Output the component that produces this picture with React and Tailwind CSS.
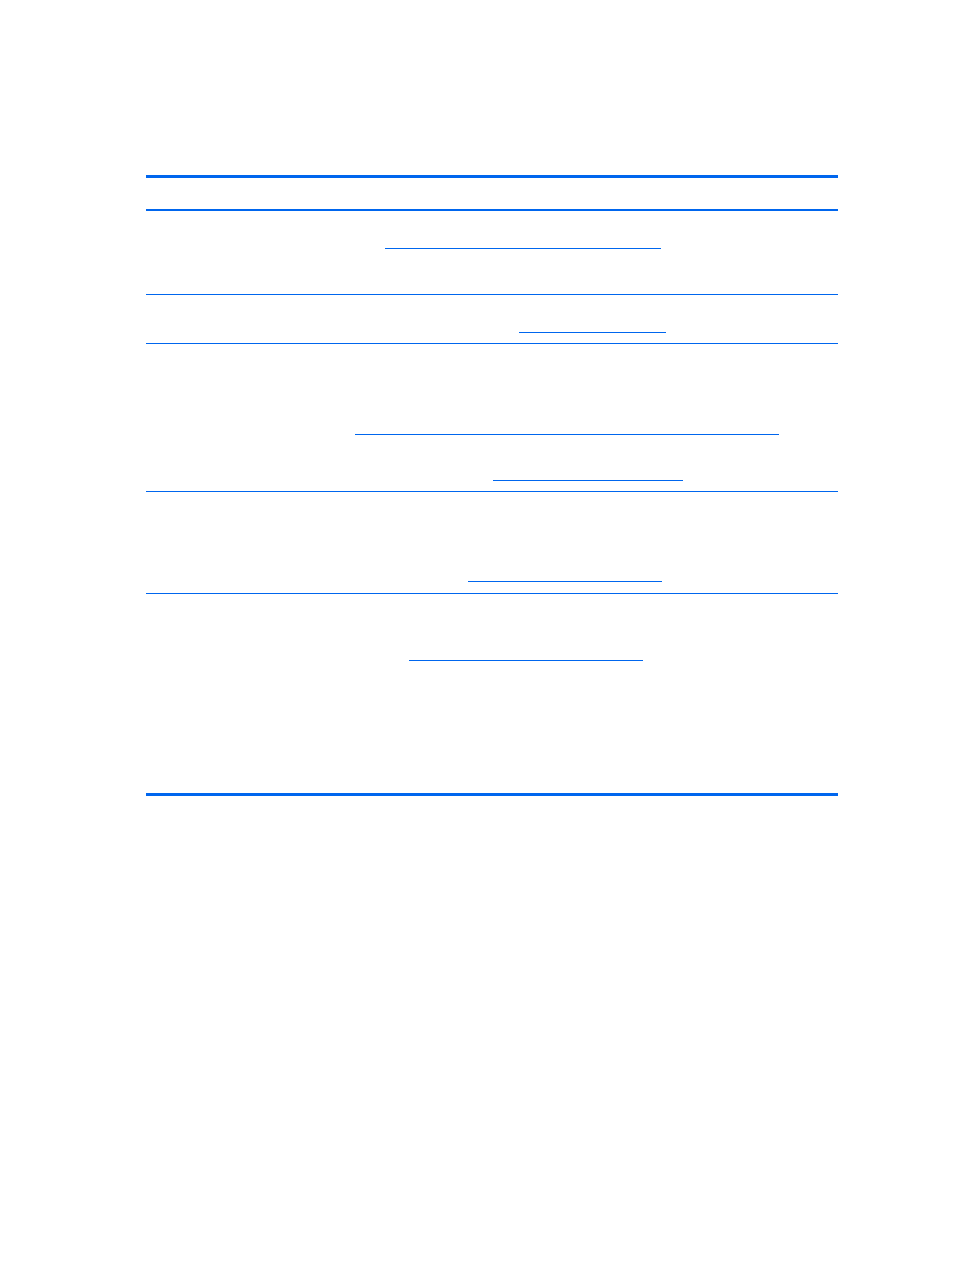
export default function App() {
  const line = "bg-[#0066ee]";
  return (
    <div className="min-h-[1270px] w-[954px] bg-white pt-[175px] pl-[146px]" style={{ fontFamily: '"Liberation Sans", Arial, sans-serif' }}>
      <div className="w-[692px]">
        <div className={`h-[3px] ${line}`} />
        <div className="h-[31px]" />
        <div className={`h-[2px] ${line}`} />
        <div className="h-[83px] flex flex-col">
          <div className={`mt-[37px] ml-[239px] w-[276px] h-px ${line}`} />
        </div>
        <div className={`h-px ${line}`} />
        <div className="h-[48px] flex flex-col">
          <div className={`mt-[37px] ml-[373px] w-[147px] h-px ${line}`} />
        </div>
        <div className={`h-px ${line}`} />
        <div className="h-[147px] flex flex-col">
          <div className={`mt-[90px] ml-[209px] w-[424px] h-px ${line}`} />
          <div className={`mt-[45px] ml-[347px] w-[190px] h-px ${line}`} />
        </div>
        <div className={`h-px ${line}`} />
        <div className="h-[101px] flex flex-col">
          <div className={`mt-[89px] ml-[322px] w-[194px] h-px ${line}`} />
        </div>
        <div className={`h-px ${line}`} />
        <div className="h-[199px] flex flex-col">
          <div className={`mt-[66px] ml-[263px] w-[234px] h-px ${line}`} />
        </div>
        <div className={`h-[3px] ${line}`} />
      </div>
    </div>
  );
}
